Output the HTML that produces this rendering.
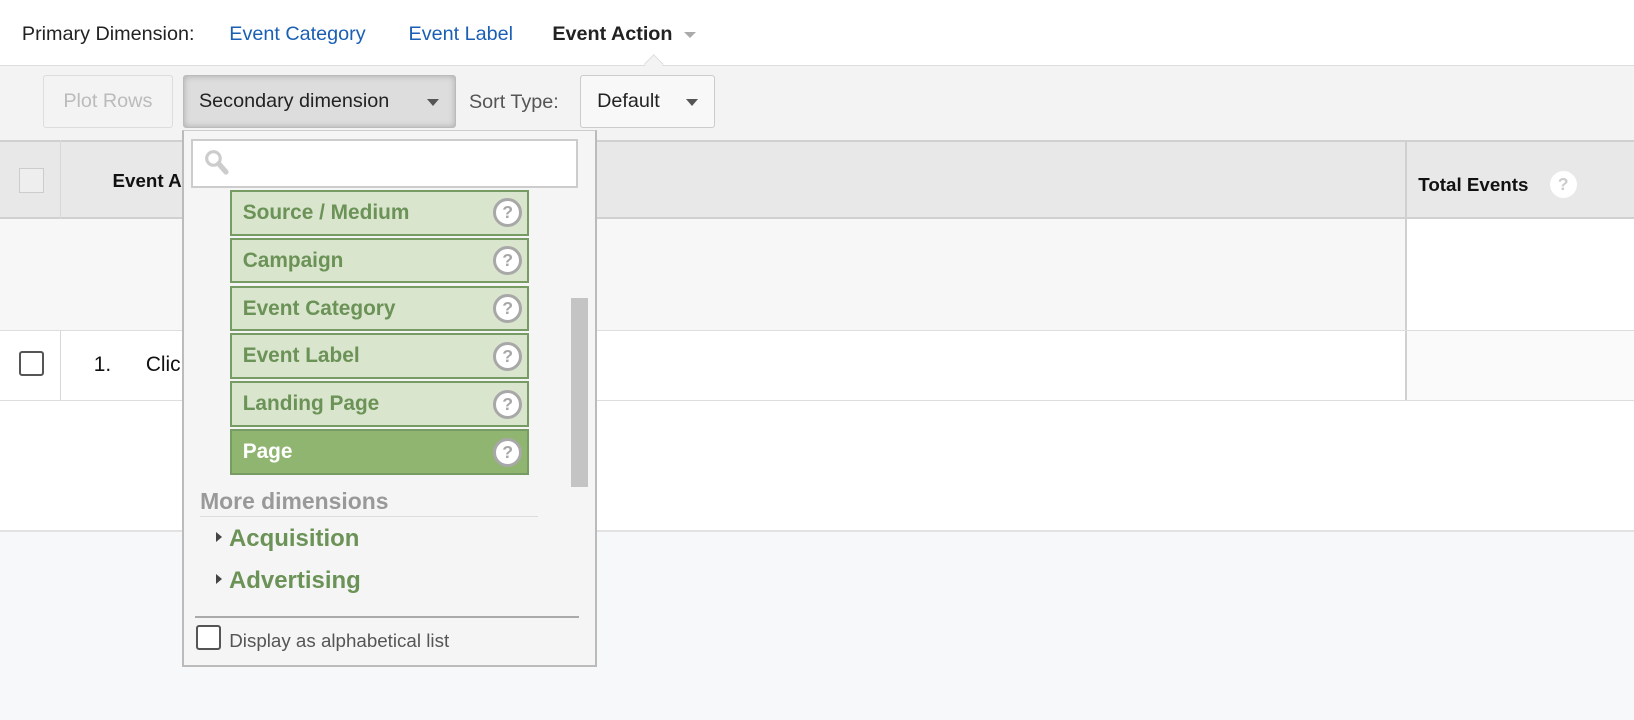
<!DOCTYPE html>
<html><head><meta charset="utf-8"><style>
html,body{margin:0;padding:0}
body{width:1568px;height:691px;zoom:1.0421;background:#f7f8f9;font-family:"Liberation Sans",sans-serif;position:relative;overflow:hidden}
.a{position:absolute}
.top{left:0;top:0;width:1568px;height:62px;background:#fff;border-bottom:1px solid #ddd}
.tb{left:0;top:63px;width:1568px;height:71px;background:#f3f3f3}
.btn{border:1px solid #ccc;border-radius:3px;box-sizing:border-box;font-size:19px;display:flex;align-items:center}
.hdr{left:0;top:134px;width:1568px;height:76px;background:#e8e8e8;border-top:2px solid #d0d0d0;border-bottom:2px solid #d0d0d0;box-sizing:border-box}
.item{position:absolute;left:221px;width:287px;height:44px;box-sizing:border-box;border:2px solid #779c63;background:#d9e5cc;color:#6b9257;font-weight:bold;font-size:20px;line-height:40px;padding-left:10px}
.q{position:absolute;right:5px;top:6px;width:22px;height:22px;border:3px solid #a8a8a8;border-radius:50%;background:#fff;color:#a8a8a8;font-size:17px;line-height:22px;text-align:center;font-weight:bold}
.tri{display:inline-block;width:0;height:0;border-left:6px solid #444;border-top:5px solid transparent;border-bottom:5px solid transparent;margin-right:7px;vertical-align:4px}
</style></head><body>
<div class="a top"></div>
<div class="a" style="left:21px;top:22px;font-size:19px;color:#222">Primary Dimension:</div>
<div class="a" style="left:220px;top:22px;font-size:19px;color:#1a5fb4">Event Category</div>
<div class="a" style="left:392px;top:22px;font-size:19px;color:#1a5fb4">Event Label</div>
<div class="a" style="left:530px;top:22px;font-size:19px;color:#222;font-weight:bold">Event Action</div>
<div class="a" style="left:656px;top:31px;border-top:6px solid #aaa;border-left:6px solid transparent;border-right:6px solid transparent"></div>
<div class="a tb"></div>
<div class="a" style="left:621px;top:55px;width:12px;height:12px;background:#f3f3f3;border-left:1px solid #ddd;border-top:1px solid #ddd;transform:rotate(45deg)"></div>
<div class="a btn" style="left:41px;top:72px;width:125px;height:51px;color:#bbb;justify-content:center;background:#f3f3f3;border-color:#ddd">Plot Rows</div>
<div class="a btn" style="left:176px;top:72px;width:262px;height:51px;color:#222;padding-left:14px;background:#ddd;box-shadow:inset 0 0 6px #aaa;border-color:#bbb">Secondary dimension<span class="a" style="left:233px;top:22px;border-top:7px solid #555;border-left:6px solid transparent;border-right:6px solid transparent"></span></div>
<div class="a" style="left:450px;top:87px;font-size:19px;color:#555">Sort Type:</div>
<div class="a btn" style="left:557px;top:72px;width:129px;height:51px;color:#222;padding-left:15px;background:#f8f8f8">Default<span class="a" style="left:100px;top:22px;border-top:7px solid #555;border-left:6px solid transparent;border-right:6px solid transparent"></span></div>
<div class="a hdr"></div>
<div class="a" style="left:58px;top:134px;width:1px;height:250px;background:#d8d8d8"></div>
<div class="a" style="left:1348px;top:134px;width:2px;height:250px;background:#d0d0d0"></div>
<div class="a" style="left:18px;top:161px;width:22px;height:22px;border:1px solid #ccc;background:#eee"></div>
<div class="a" style="left:108px;top:163px;font-size:18px;font-weight:bold;color:#111">Event Action</div>
<div class="a" style="left:1361px;top:167px;font-size:18px;font-weight:bold;color:#111">Total Events</div>
<div class="a" style="left:1487px;top:164px;width:26px;height:26px;border-radius:50%;background:#fff;color:#ccc;font-weight:bold;text-align:center;line-height:26px;font-size:17px">?</div>
<div class="a" style="left:0;top:210px;width:1348px;height:107px;background:#f7f7f7"></div>
<div class="a" style="left:1350px;top:210px;width:218px;height:107px;background:#fff"></div>
<div class="a" style="left:0;top:317px;width:1568px;height:1px;background:#ddd"></div>
<div class="a" style="left:0;top:318px;width:1348px;height:66px;background:#fff"></div>
<div class="a" style="left:58px;top:318px;width:1px;height:66px;background:#d8d8d8"></div>
<div class="a" style="left:1350px;top:318px;width:218px;height:66px;background:#fafafa"></div>
<div class="a" style="left:0;top:384px;width:1568px;height:124px;background:#fff;border-top:1px solid #ddd;border-bottom:2px solid #e2e2e2"></div>
<div class="a" style="left:18px;top:337px;width:20px;height:20px;border:2px solid #555;border-radius:3px;background:#fff"></div>
<div class="a" style="left:90px;top:339px;font-size:20px;color:#111">1.</div>
<div class="a" style="left:140px;top:339px;font-size:20px;color:#111">Click</div>
<div class="a" style="left:175px;top:125px;width:398px;height:515px;box-sizing:border-box;background:#f5f5f5;border:2px solid #bbb;border-top:1px solid #ccc"></div>
<div class="a" style="left:183px;top:133px;width:372px;height:47px;box-sizing:border-box;background:#fff;border:2px solid #ccc"></div>
<svg class="a" style="left:194px;top:141px" width="30" height="30"><circle cx="11" cy="11" r="6.5" fill="none" stroke="#ccc" stroke-width="3"/><line x1="16" y1="16" x2="23" y2="24" stroke="#ccc" stroke-width="5" stroke-linecap="round"/></svg>
<div class="item" style="top:182px">Source / Medium<span class="q">?</span></div>
<div class="item" style="top:228px">Campaign<span class="q">?</span></div>
<div class="item" style="top:274px">Event Category<span class="q">?</span></div>
<div class="item" style="top:320px">Event Label<span class="q">?</span></div>
<div class="item" style="top:366px">Landing Page<span class="q">?</span></div>
<div class="item" style="top:412px;background:#8fb570;color:#fff">Page<span class="q">?</span></div>
<div class="a" style="left:548px;top:286px;width:16px;height:181px;background:#c4c4c4"></div>
<div class="a" style="left:192px;top:468px;font-size:22px;font-weight:bold;color:#999">More dimensions</div>
<div class="a" style="left:192px;top:495px;width:324px;height:1px;background:#ddd"></div>
<div class="a" style="left:207px;top:504px;font-size:23px;font-weight:bold;color:#6b9257"><span class="tri"></span>Acquisition</div>
<div class="a" style="left:207px;top:544px;font-size:23px;font-weight:bold;color:#6b9257"><span class="tri"></span>Advertising</div>
<div class="a" style="left:187px;top:591px;width:369px;height:2px;background:#aaa"></div>
<div class="a" style="left:188px;top:600px;width:20px;height:20px;border:2px solid #555;border-radius:3px;background:#fff"></div>
<div class="a" style="left:220px;top:605px;font-size:18px;color:#555">Display as alphabetical list</div>
</body></html>
